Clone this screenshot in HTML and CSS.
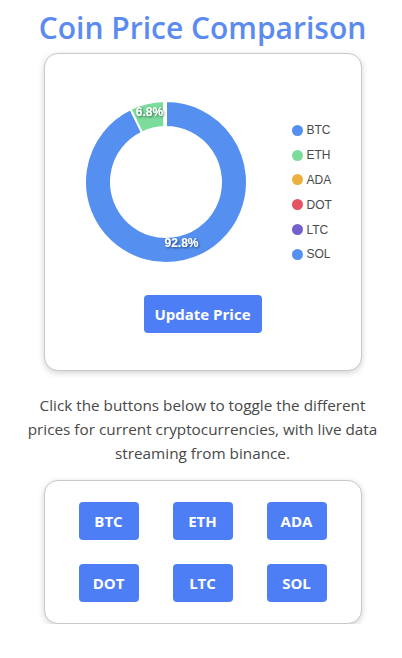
FILE: index.html
```html
<!DOCTYPE html>
<html lang="en">
<head>
<meta charset="utf-8">
<title>Coin Price Comparison</title>
<link rel="stylesheet" href="styles.css">
</head>
<body>
<main class="page">
  <h1 class="title">Coin Price Comparison</h1>
  <section class="card chart-card">
    <div class="chart-row">
      <svg class="donut" width="162" height="162" viewBox="-81 -81 162 162">
        <defs>
          <filter id="ts" x="-20%" y="-40%" width="140%" height="180%">
            <feDropShadow dx="1" dy="1" stdDeviation="0.8" flood-color="#000" flood-opacity="0.55"/>
          </filter>
        </defs>
        <path class="seg seg-btc" d="M0,-81 A81,81 0 1 1 -35.41,-72.85 L-24.04,-49.47 A55,55 0 1 0 0,-55 Z"/>
        <path class="seg seg-eth" d="M-35.41,-72.85 A81,81 0 0 1 -2.04,-80.97 L-1.38,-54.98 A55,55 0 0 0 -24.04,-49.47 Z"/>
        <path class="seg seg-sol" d="M-2.04,-80.97 A81,81 0 0 1 0,-81 L0,-55 A55,55 0 0 0 -1.38,-54.98 Z"/>
        <text class="pct" x="-16.5" y="-69" filter="url(#ts)">6.8%</text>
        <text class="pct" x="15.5" y="62" filter="url(#ts)">92.8%</text>
      </svg>
      <ul class="legend">
        <li class="legend-item"><span class="dot dot-btc"></span>BTC</li>
        <li class="legend-item"><span class="dot dot-eth"></span>ETH</li>
        <li class="legend-item"><span class="dot dot-ada"></span>ADA</li>
        <li class="legend-item"><span class="dot dot-dot"></span>DOT</li>
        <li class="legend-item"><span class="dot dot-ltc"></span>LTC</li>
        <li class="legend-item"><span class="dot dot-sol"></span>SOL</li>
      </ul>
    </div>
    <button class="btn btn-update">Update Price</button>
  </section>
  <p class="intro">Click the buttons below to toggle the different prices for current cryptocurrencies, with live data streaming from binance.</p>
  <section class="card coin-card">
    <div class="coin-grid">
      <button class="btn btn-coin">BTC</button>
      <button class="btn btn-coin">ETH</button>
      <button class="btn btn-coin">ADA</button>
      <button class="btn btn-coin">DOT</button>
      <button class="btn btn-coin">LTC</button>
      <button class="btn btn-coin">SOL</button>
    </div>
  </section>
</main>
</body>
</html>
```
FILE: styles.css
```css
* { box-sizing: border-box; }
html, body { margin: 0; padding: 0; background: #fff; }
body { font-family: "Open Sans", "Noto Sans", sans-serif; color: #444; }

.page {
  display: flex;
  flex-direction: column;
  align-items: center;
  padding-left: 3px;
}

.title {
  margin: 8px 0 0;
  font-size: 30px;
  line-height: 40px;
  font-weight: 600;
  color: #5b8af0;
  letter-spacing: 0;
}

.card {
  background: #fff;
  border: 1px solid #c8c8c8;
  border-radius: 14px;
  box-shadow: 0 2px 6px rgba(0, 0, 0, 0.18);
  width: 318px;
}

.chart-card {
  margin-top: 5px;
  height: 318px;
  display: flex;
  flex-direction: column;
  align-items: center;
  padding-top: 47px;
}

.chart-row {
  display: flex;
  align-items: flex-start;
  align-self: flex-start;
  padding-left: 40px;
}

.donut { display: block; }
.seg { stroke: #fff; stroke-width: 2; }
.seg-btc { fill: #5590f0; }
.seg-eth { fill: #7bdc9c; }
.seg-sol { fill: #5590f0; }

.pct {
  fill: #fff;
  font-family: "Liberation Sans", Arial, sans-serif;
  font-weight: 700;
  font-size: 12px;
  text-anchor: middle;
  dominant-baseline: middle;
}

.legend {
  list-style: none;
  margin: 17px 0 0 45px;
  padding: 0;
  display: flex;
  flex-direction: column;
}

.legend-item {
  display: flex;
  align-items: center;
  gap: 4px;
  height: 24.8px;
  font-family: "Liberation Sans", Arial, sans-serif;
  font-size: 12px;
  color: #4a4a4a;
}

.dot {
  width: 11px;
  height: 11px;
  border-radius: 50%;
  flex: none;
}
.dot-btc { background: #5590f0; }
.dot-eth { background: #7bdc9c; }
.dot-ada { background: #ebb040; }
.dot-dot { background: #e45463; }
.dot-ltc { background: #7560cd; }
.dot-sol { background: #5590f0; }

.btn {
  border: none;
  background: #4e7ef5;
  color: #fff;
  font-family: "Open Sans", "Noto Sans", sans-serif;
  font-weight: 700;
  font-size: 15px;
  border-radius: 4px;
  padding: 0;
  height: 38px;
  cursor: pointer;
}

.btn-update {
  width: 118px;
  margin-top: 28px;
}

.intro {
  width: 358px;
  margin: 22px 0 0;
  text-align: center;
  font-size: 15.3px;
  line-height: 24px;
  color: #484848;
}

.coin-card {
  margin-top: 15px;
  height: 144px;
  display: flex;
  justify-content: center;
  align-items: center;
}

.coin-grid {
  display: grid;
  grid-template-columns: repeat(3, 60px);
  column-gap: 34px;
  row-gap: 24px;
}

.btn-coin { width: 60px; }
```
